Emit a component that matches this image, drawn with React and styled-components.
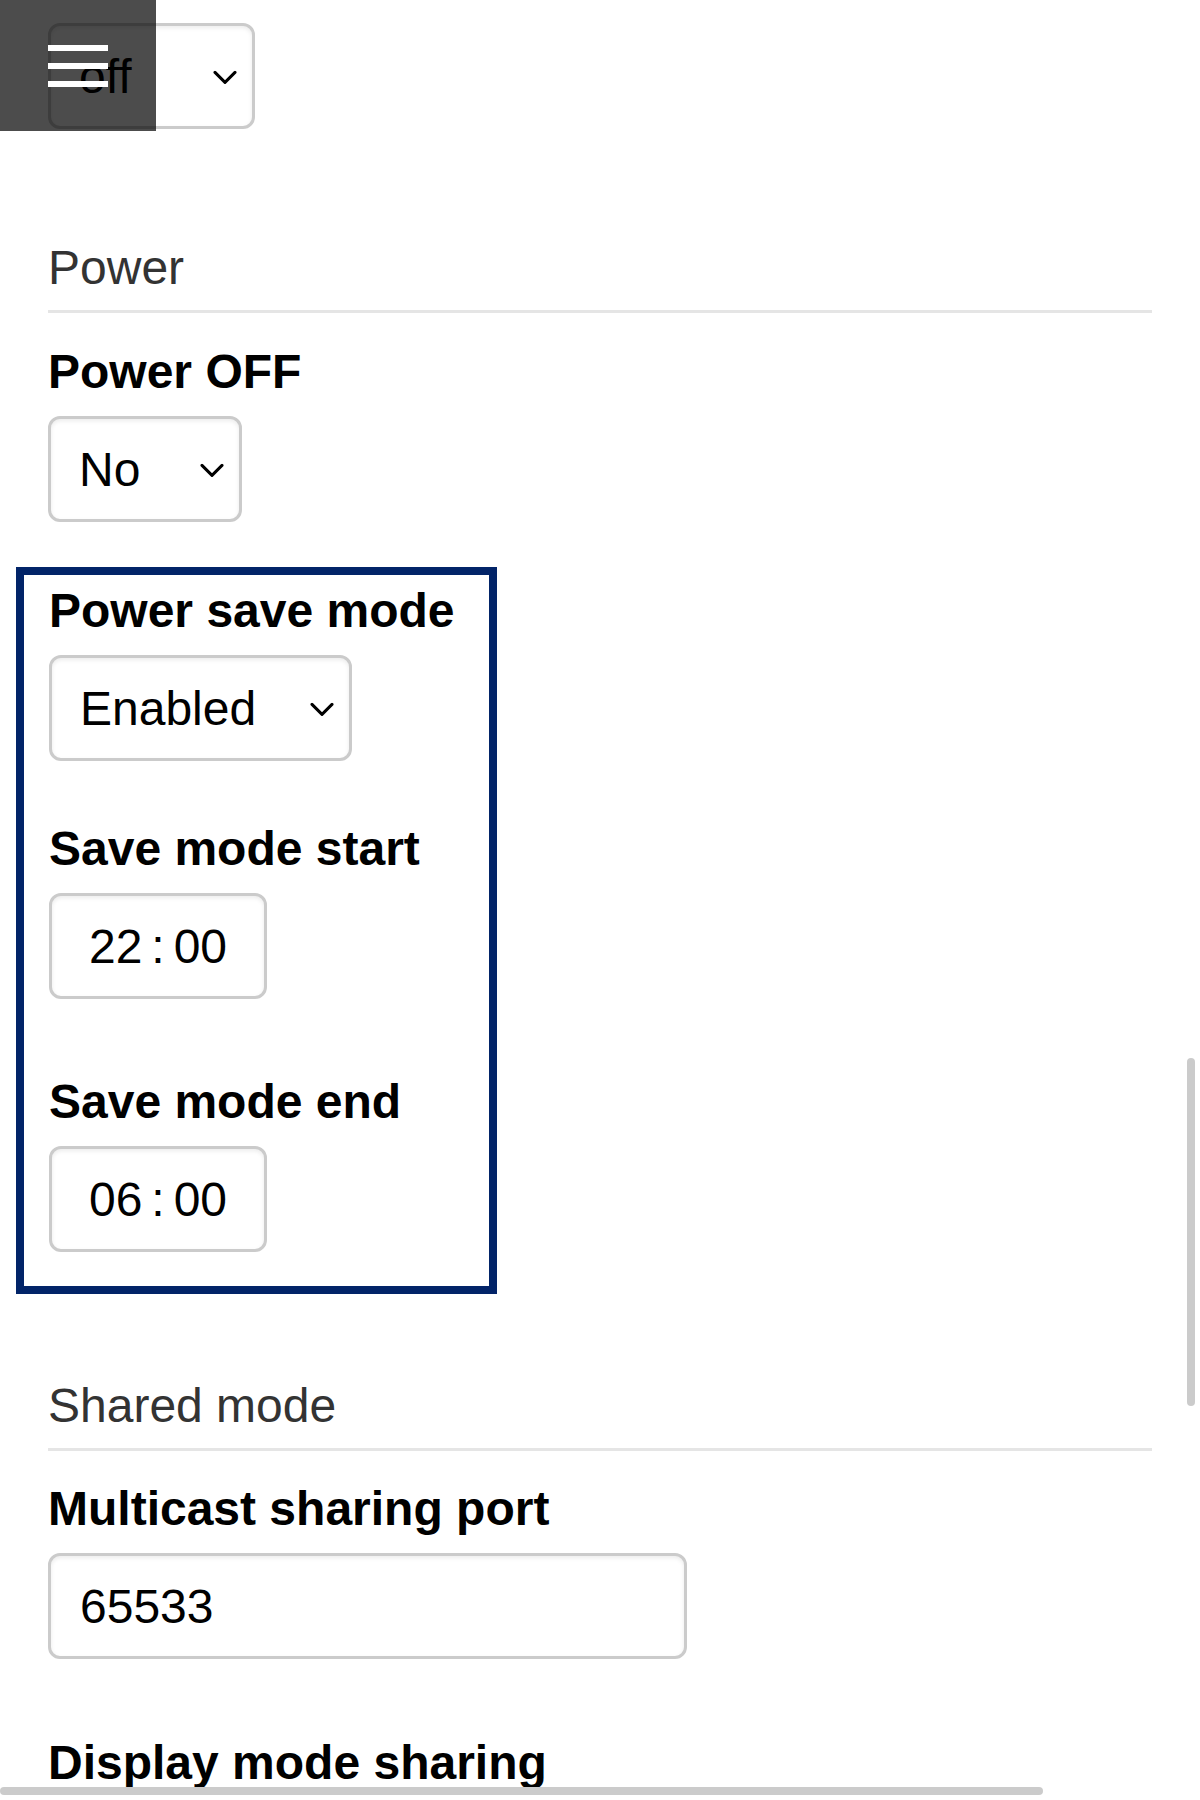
import styled, { createGlobalStyle } from "styled-components";

const GlobalStyle = createGlobalStyle`
  html, body {
    margin: 0;
    padding: 0;
    background: #fff;
    overflow: hidden;
  }
  #root {
    height: 1800px;
  }
`;

const Chevron = () => (
  <svg width="24" height="14" viewBox="0 0 24 14" fill="none">
    <path d="M2 2 L12 12 L22 2" stroke="#000" strokeWidth="3" strokeLinecap="round" strokeLinejoin="round" />
  </svg>
);

const Dropdown = ({ value, options, width }) => (
  <SelectWrap $width={width}>
    <Select defaultValue={value}>
      {options.map((o) => (
        <option key={o}>{o}</option>
      ))}
    </Select>
    <ChevronSlot>
      <Chevron />
    </ChevronSlot>
  </SelectWrap>
);

const TimeField = ({ hours, minutes }) => (
  <TimeBox>
    <span>{hours}</span>
    <TimeSep>:</TimeSep>
    <span>{minutes}</span>
  </TimeBox>
);

const App = () => {
  return (
    <Page>
      <GlobalStyle />
      <Content>
        <Field $top={23}>
          <Dropdown value="off" options={["off", "on"]} width={207} />
        </Field>

        <Section $top={111}>
          <Legend>Power</Legend>

          <Field $top={31}>
            <Label>Power OFF</Label>
            <Dropdown value="No" options={["No", "Yes"]} width={194} />
          </Field>

          {/* highlighted block */}
          <Highlight>
            <Field $top={0}>
              <Label>Power save mode</Label>
              <Dropdown value="Enabled" options={["Enabled", "Disabled"]} width={303} />
            </Field>
            <Field $top={60}>
              <Label>Save mode start</Label>
              <TimeField hours="22" minutes="00" />
            </Field>
            <Field $top={75}>
              <Label>Save mode end</Label>
              <TimeField hours="06" minutes="00" />
            </Field>
          </Highlight>
        </Section>

        <Section $top={84}>
          <Legend>Shared mode</Legend>
          <Field $top={30}>
            <Label>Multicast sharing port</Label>
            <TextBox type="text" readOnly value="65533" />
          </Field>
          <Field $top={76}>
            <Label>Display mode sharing</Label>
          </Field>
        </Section>
      </Content>

      <MenuButton>
        <MenuLine />
        <MenuLine />
        <MenuLine />
      </MenuButton>

      <VScroll />
      <HScroll />
    </Page>
  );
};

const Page = styled.div`
  position: relative;
  width: 1200px;
  height: 1800px;
  overflow: hidden;
  font-family: "Liberation Sans", Arial, sans-serif;
  color: #000;
`;

const Content = styled.div`
  display: flex;
  flex-direction: column;
  padding: 0 48px 0 48px;
`;

const Section = styled.fieldset`
  margin: ${(p) => p.$top}px 0 0 0;
  padding: 0;
  border: none;
  min-width: 0;
  display: flex;
  flex-direction: column;
`;

const Legend = styled.div`
  font-size: 48px;
  line-height: 56px;
  color: #333;
  padding-bottom: 14px;
  border-bottom: 3px solid #e5e5e5;
`;

const Field = styled.div`
  display: flex;
  flex-direction: column;
  align-items: flex-start;
  gap: 16px;
  margin-top: ${(p) => p.$top}px;
`;

const Label = styled.label`
  font-size: 48px;
  line-height: 56px;
  font-weight: bold;
`;

const SelectWrap = styled.div`
  position: relative;
  box-sizing: border-box;
  width: ${(p) => p.$width}px;
  height: 106px;
  border: 3px solid #cbcbcb;
  border-radius: 12px;
  box-shadow: inset 0 2px 4px rgba(0, 0, 0, 0.08);
  background: #fff;
`;

const Select = styled.select`
  appearance: none;
  -webkit-appearance: none;
  width: 100%;
  height: 100%;
  border: none;
  background: transparent;
  padding: 0 0 0 28px;
  margin: 0;
  font-family: "Liberation Sans", Arial, sans-serif;
  font-size: 48px;
  color: #000;
  outline: none;
`;

const ChevronSlot = styled.span`
  position: absolute;
  right: 15px;
  top: 50%;
  transform: translateY(-40%);
  display: flex;
  pointer-events: none;
`;

const boxBase = `
  box-sizing: border-box;
  height: 106px;
  border: 3px solid #cbcbcb;
  border-radius: 12px;
  box-shadow: inset 0 2px 4px rgba(0, 0, 0, 0.08);
  background: #fff;
  font-family: "Liberation Sans", Arial, sans-serif;
  font-size: 48px;
  color: #000;
  outline: none;
  margin: 0;
`;

const TimeBox = styled.div`
  ${boxBase}
  width: 218px;
  display: flex;
  align-items: center;
  justify-content: center;
`;

const TimeSep = styled.span`
  margin: 0 9px;
`;

const TextBox = styled.input`
  ${boxBase}
  width: 639px;
  padding: 0 0 0 29px;
`;

const Highlight = styled.div`
  display: flex;
  flex-direction: column;
  box-sizing: border-box;
  width: 481px;
  margin: 45px 0 0 -32px;
  padding: 8px 0 34px 25px;
  border: 8px solid #022468;
`;

const MenuButton = styled.div`
  position: absolute;
  top: 0;
  left: 0;
  width: 156px;
  height: 131px;
  box-sizing: border-box;
  padding: 45px 0 0 48px;
  display: flex;
  flex-direction: column;
  gap: 12px;
  background: rgba(0, 0, 0, 0.7);
`;

const MenuLine = styled.span`
  display: block;
  width: 60px;
  height: 6px;
  background: #fff;
`;

const VScroll = styled.div`
  position: absolute;
  right: 5px;
  top: 1058px;
  width: 8px;
  height: 348px;
  border-radius: 4px;
  background: #cbcbcb;
`;

const HScroll = styled.div`
  position: absolute;
  left: 0;
  bottom: 5px;
  width: 1043px;
  height: 8px;
  border-radius: 4px;
  background: #cbcbcb;
`;

export default App;
